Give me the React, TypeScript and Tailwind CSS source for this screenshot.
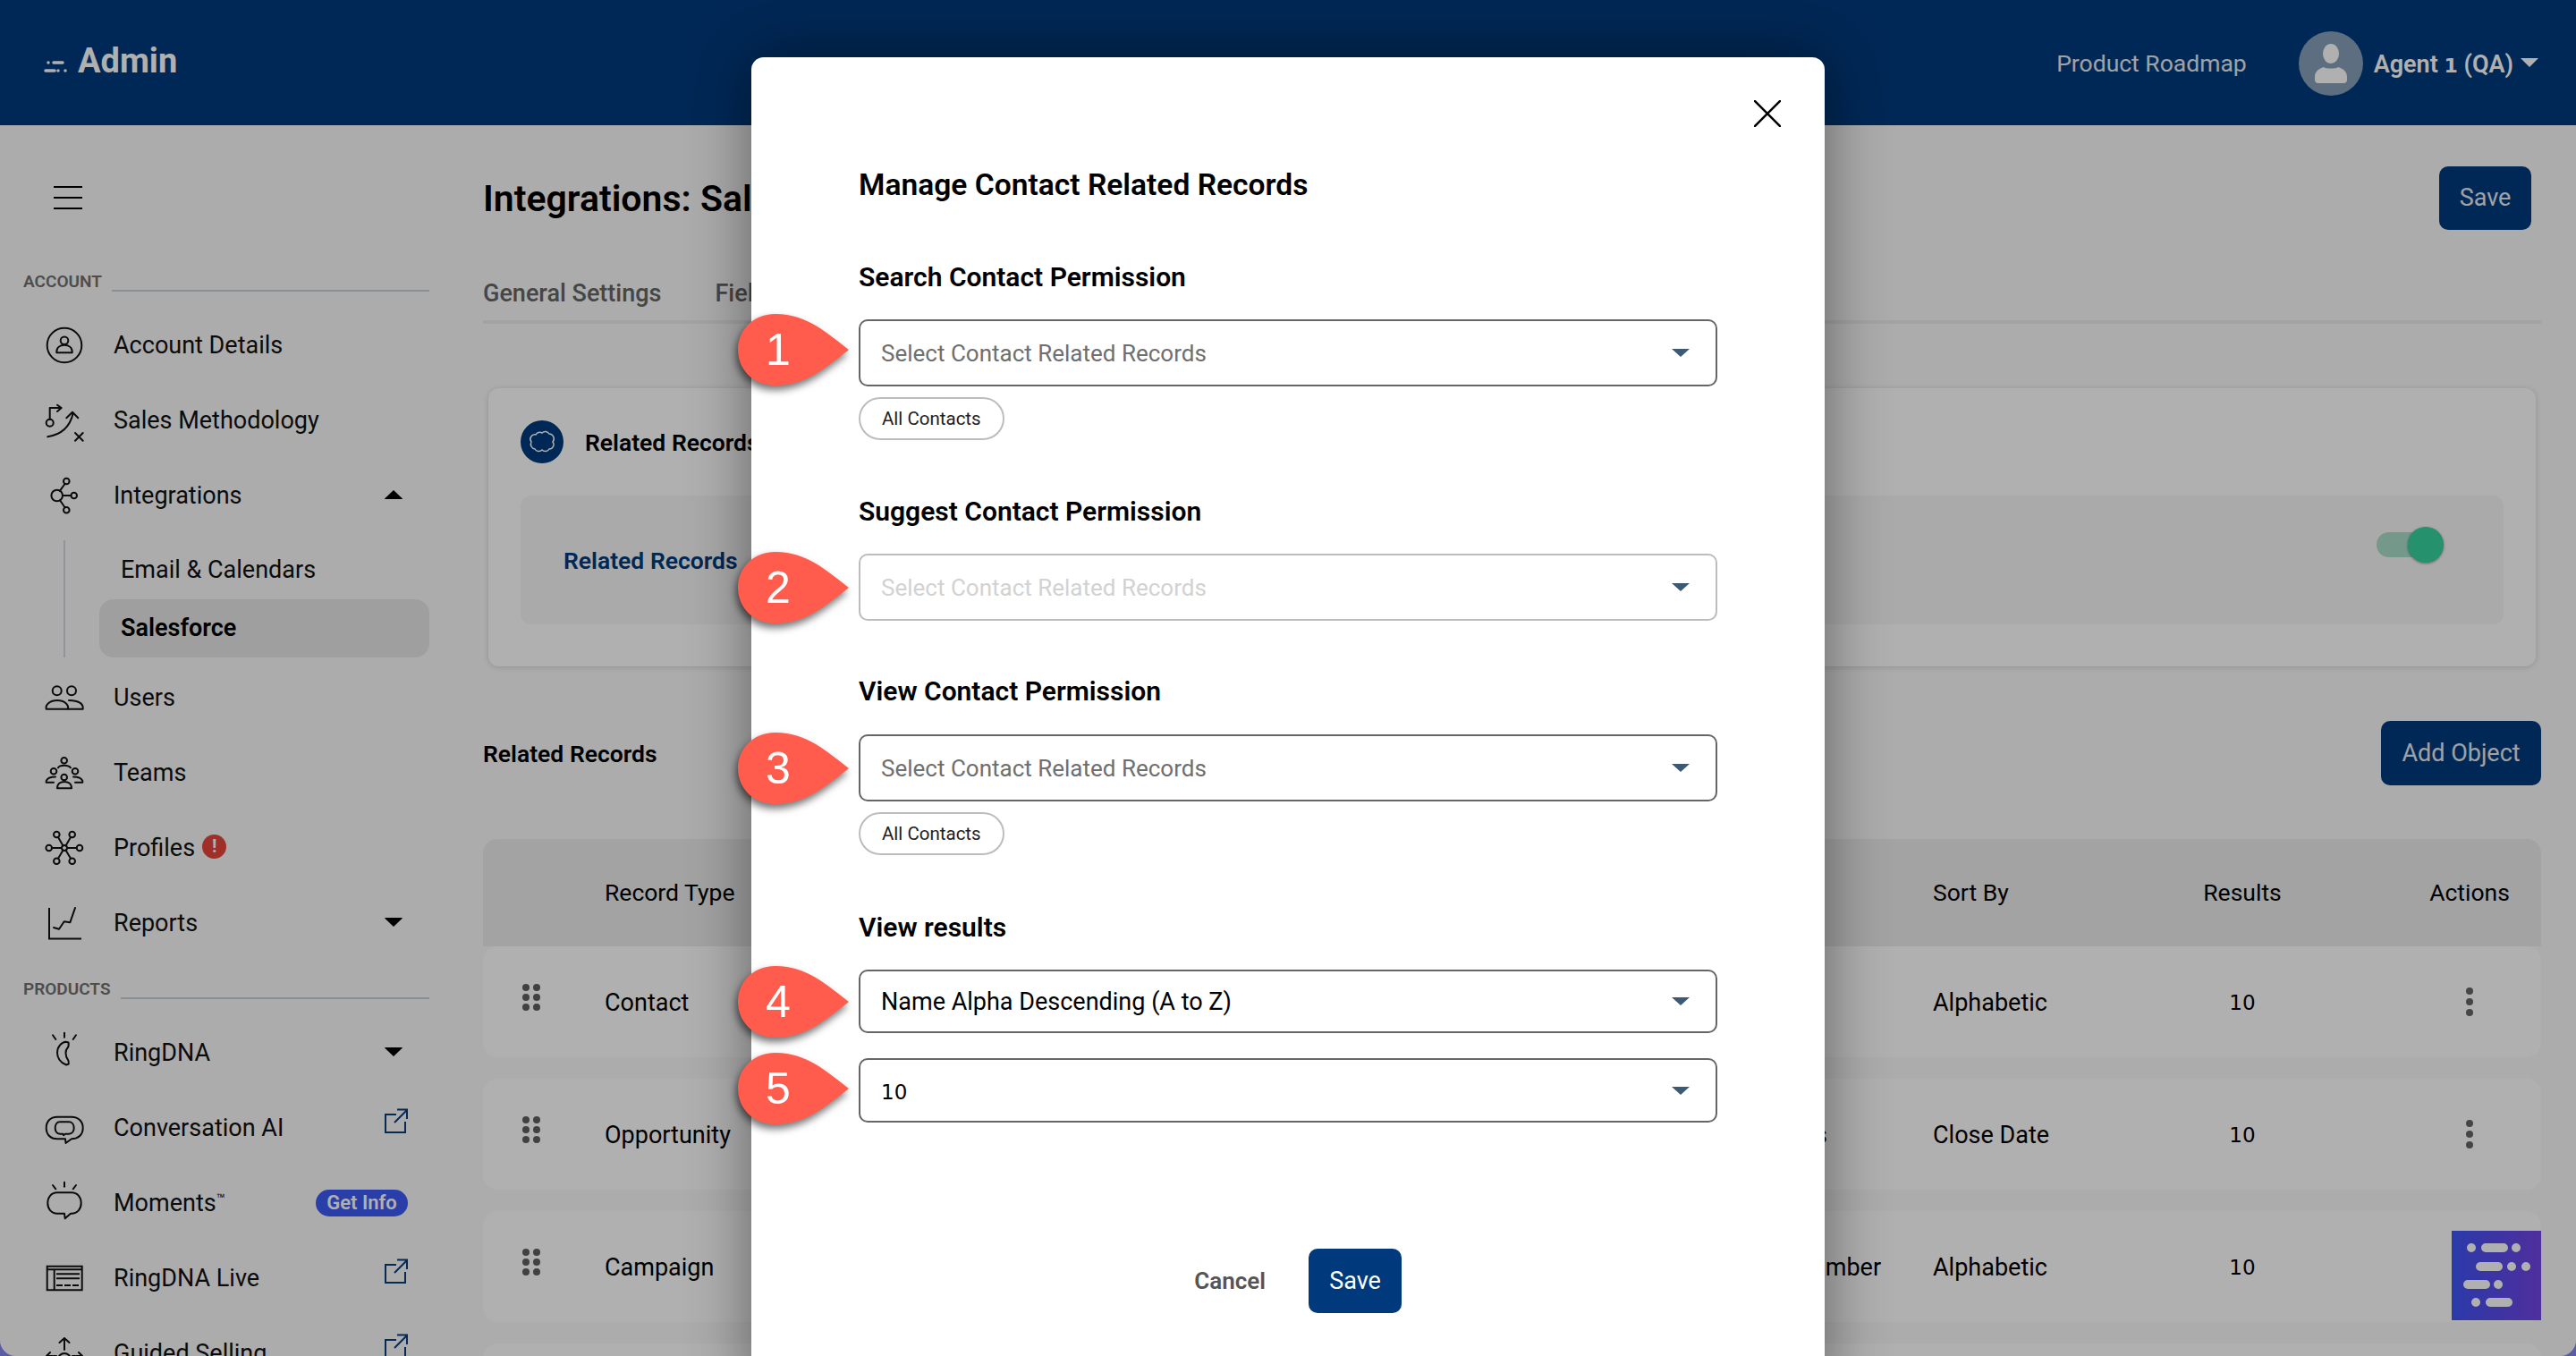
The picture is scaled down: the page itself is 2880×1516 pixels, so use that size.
import { ReactNode } from 'react'

const stroke = {
  fill: 'none',
  stroke: 'currentColor',
  strokeWidth: 2,
  strokeLinecap: 'round' as const,
  strokeLinejoin: 'round' as const
}

const Glyph = ({ children }: { children: ReactNode }) => (
  <svg
    viewBox="0 0 44 44"
    className="w-[44px] h-[44px] shrink-0 overflow-visible text-[#111]"
    {...stroke}
  >
    {children}
  </svg>
)

const AccountIcon = () => (
  <Glyph>
    <circle cx="22" cy="22" r="19.3" />
    <circle cx="22" cy="16.7" r="4.3" />
    <path d="M13.3 30.3v-1c0-5 4-7.5 8.7-7.5s8.7 2.5 8.7 7.5v1z" />
  </Glyph>
)

const SalesIcon = () => (
  <Glyph>
    <circle cx="5.7" cy="24.7" r="4" />
    <path d="M5.7 20.7V8h12.6M14 4.7 18.7 8 14 12" />
    <path d="M3.3 40.3C18 38 28 30 31.7 14M24.3 19.3 31 12.7l6.3 6.6" />
    <path d="M34 36l8.7 8.7M42.7 36 34 44.7" />
  </Glyph>
)

const IntegrationsIcon = () => (
  <Glyph>
    <circle cx="13.7" cy="22" r="6.3" />
    <circle cx="24.3" cy="6" r="3.3" />
    <circle cx="32.7" cy="22" r="3.3" />
    <circle cx="24.3" cy="38.3" r="3.3" />
    <path d="M17 16.7 22.5 9M20 22h9.4M17 27.3l5.5 8" />
  </Glyph>
)

const UsersIcon = () => (
  <Glyph>
    <circle cx="13.7" cy="14.3" r="5" />
    <circle cx="30" cy="14.3" r="5" />
    <path d="M1.7 34.7H26C27 30 22 25 14 25S.5 30 1.7 34.7z" />
    <path d="M26.7 34.7h16C43.5 29 38 25 27 25" />
  </Glyph>
)

const TeamsIcon = () => (
  <Glyph>
    <circle cx="21.7" cy="8.3" r="3.3" />
    <circle cx="10" cy="20.3" r="3.3" />
    <circle cx="34" cy="20.3" r="3.3" />
    <circle cx="21.7" cy="27" r="3.3" />
    <path d="M15 16.3c2-3.3 11-3.3 14 0" />
    <path d="M1.7 32.7V31c1.3-3.5 5.3-4.5 10.3-4.5M42.3 32.7V31c-1.3-3.5-5.3-4.5-10.3-4.5M1.7 32.7H10M34 32.7h8.3" />
    <path d="M14 39.3c0-5.3 4-7.3 8-7.3s8 2 8 7.3z" />
  </Glyph>
)

const ProfilesIcon = () => (
  <Glyph>
    <circle cx="22" cy="22" r="3" />
    <circle cx="4.7" cy="22" r="3.3" />
    <circle cx="39" cy="22" r="3.3" />
    <circle cx="13.3" cy="7" r="3.3" />
    <circle cx="30.7" cy="7" r="3.3" />
    <circle cx="13.3" cy="36.7" r="3.3" />
    <circle cx="30.7" cy="36.7" r="3.3" />
    <path d="M8 22h11M25 22h10.700M15 10l5.500 9.500M29 10l-5.500 9.500M15 33.700l5.500-9.200M29 33.700l-5.500-9.200" />
  </Glyph>
)

const ReportsIcon = () => (
  <Glyph>
    <path d="M5 5v34.500h36" strokeLinecap="butt" strokeLinejoin="miter" />
    <path d="M10 27l6 1.700 5.700-8.400 6.600 1L34 5" />
  </Glyph>
)

const RingIcon = () => (
  <Glyph>
    <path d="M22-.3v5M9 2.300 12.300 7M35 2.300 31.700 7" />
    <path d="M23.700 9.700l2.800.8c.5 2.500 0 5-1 6-2.500 2.500-3 8.500.5 13.500 1 1 1 3 .7 4.500l-2.700 1C17 33 14 27 14 22c0-7 5-12 9.700-12.300z" />
  </Glyph>
)

const ConversationIcon = () => (
  <Glyph>
    <path d="M14 9.700h16c8 0 12.700 5.300 12.700 12.300S38 34.300 30 34.300l-6.500 4.700-.5-4.700h-9C6 34.300 1.700 29 1.700 22S6 9.700 14 9.700z" />
    <path d="M17 15.300h10c3.500 0 5.700 3 5.700 6.700s-2.200 6.700-5.700 6.700h-4l-2 1.500-.5-1.500H17c-3.500 0-5.300-3-5.300-6.700s1.800-6.700 5.300-6.700z" />
  </Glyph>
)

const MomentsIcon = () => (
  <Glyph>
    <path d="M22-1.300v5M9 2l3.300 4.300M35 2l-3.300 4.300" />
    <path d="M14 10.300h16c6.500 0 10.700 5 10.700 11.700S36.500 33.700 30 33.700h-1l-6.300 5.600-.7-5.600h-8C7.500 33.700 3.300 28.700 3.300 22S7.500 10.300 14 10.300z" />
  </Glyph>
)

const LiveIcon = () => (
  <Glyph>
    <path d="M2.700 8.700h39v26.600h-39zM2.700 12.300h39M10.700 12.300v23" strokeLinecap="butt" strokeLinejoin="miter" />
    <path d="M13 17.300h26M13 22.300h26" strokeLinecap="butt" />
    <path d="M13 30h26" strokeLinecap="butt" strokeDasharray="7 2" />
  </Glyph>
)

const GuidedIcon = () => (
  <Glyph>
    <path d="M22 18V5M16.500 10 22 5l5.500 5" />
    <circle cx="22" cy="29" r="7" />
    <path d="M13 25H2M6 21l-4 4 4 4M31 25h11M38 21l4 4-4 4" />
  </Glyph>
)

const Caret = ({ up = false }: { up?: boolean }) => (
  <svg viewBox="0 0 20 10" className="w-[20px] h-[10px] mr-[30px] ml-auto -mt-[3px] text-black">
    <path
      d={up ? 'M10 0 20 9.500Q20 10 19 10H1Q0 10 0 9.500z' : 'M10 10 20 .5Q20 0 19 0H1Q0 0 0 .5z'}
      fill="currentColor"
    />
  </svg>
)

const ExternalLink = () => (
  <svg
    viewBox="0 0 26 28"
    className="w-[26px] h-[28px] ml-auto mr-[24px] -mt-[16px] text-[#0a3d78]"
    fill="none"
    stroke="currentColor"
    strokeWidth="2"
  >
    <path d="M13 7H1v20h22v-12M11 16 25 2M14 1.500h11V12" />
  </svg>
)

const SectionLabel = ({ title }: { title: string }) => (
  <div className="flex items-center gap-[11px] h-[30px]">
    <span className="text-[19px] font-semibold text-[#707070]">{title}</span>
    <span className="flex-1 h-[2px] mt-[20px] bg-[#c9d0d8]" />
  </div>
)

const NavRow = ({
  icon,
  label,
  children
}: {
  icon: ReactNode
  label: ReactNode
  children?: ReactNode
}) => (
  <div className="flex items-center h-[84px] pl-[24px]">
    {icon}
    <span className="ml-[33px] mt-[1px] text-[27px] text-[#111] whitespace-nowrap">{label}</span>
    {children}
  </div>
)

const Sidebar = () => (
  <aside className="w-[540px] shrink-0 pl-[26px] pr-[60px]">
    <div className="flex flex-col gap-[10px] w-[32px] ml-[34px] mt-[68px]">
      <span className="h-[2px] bg-black" />
      <span className="h-[2px] bg-black" />
      <span className="h-[2px] bg-black" />
    </div>
    <div className="mt-[66px]">
      <SectionLabel title="ACCOUNT" />
    </div>
    <div className="mt-[14px]">
      <NavRow icon={<AccountIcon />} label="Account Details" />
      <NavRow icon={<SalesIcon />} label="Sales Methodology" />
      <NavRow icon={<IntegrationsIcon />} label="Integrations">
        <Caret up />
      </NavRow>
      <div className="ml-[45px] mt-[8px] border-l-2 border-[#d3d8de] pl-[38px]">
        <div className="flex items-center h-[66px] pl-[24px] text-[27px] text-[#111]">
          Email &amp; Calendars
        </div>
        <div className="flex items-center h-[65px] pl-[24px] text-[27px] font-semibold text-black bg-[#e6e6e6] rounded-[16px]">
          Salesforce
        </div>
      </div>
      <div className="mt-[3px]">
        <NavRow icon={<UsersIcon />} label="Users" />
        <NavRow icon={<TeamsIcon />} label="Teams" />
        <NavRow
          icon={<ProfilesIcon />}
          label={
            <span className="flex items-center gap-[8px]">
              Profiles
              <span className="w-[27px] h-[27px] -mt-[5px] rounded-full bg-[#e8453c] text-white text-[20px] font-bold leading-[27px] text-center">
                !
              </span>
            </span>
          }
        />
        <NavRow icon={<ReportsIcon />} label="Reports">
          <Caret />
        </NavRow>
      </div>
    </div>
    <div className="mt-[17px]">
      <SectionLabel title="PRODUCTS" />
    </div>
    <div className="mt-[14px]">
      <NavRow icon={<RingIcon />} label="RingDNA">
        <Caret />
      </NavRow>
      <NavRow icon={<ConversationIcon />} label="Conversation AI">
        <ExternalLink />
      </NavRow>
      <NavRow
        icon={<MomentsIcon />}
        label={
          <>
            Moments<sup className="text-[16px]">™</sup>
          </>
        }
      >
        <span className="ml-auto mr-[24px] h-[30px] w-[103px] rounded-full bg-[#3d5bf5] text-white text-[22px] font-semibold leading-[30px] text-center">
          Get Info
        </span>
      </NavRow>
      <NavRow icon={<LiveIcon />} label="RingDNA Live">
        <ExternalLink />
      </NavRow>
      <NavRow icon={<GuidedIcon />} label="Guided Selling">
        <ExternalLink />
      </NavRow>
    </div>
  </aside>
)

const DragHandle = () => (
  <div className="grid grid-cols-2 gap-x-[4px] gap-y-[3px] w-[20px] -mt-[10px]">
    {[0, 1, 2, 3, 4, 5].map(i => (
      <span key={i} className="w-[8px] h-[8px] rounded-full bg-[#5f5f5f]" />
    ))}
  </div>
)

const rows = [
  { type: 'Contact', field: '', sort: 'Alphabetic' },
  { type: 'Opportunity', field: 'Deal Stages', sort: 'Close Date' },
  { type: 'Campaign', field: 'Account Number', sort: 'Alphabetic' },
  { type: 'Account', field: '', sort: 'Alphabetic' }
]

const Table = () => (
  <div className="mt-[60px] text-[27px] text-black">
    <div className="flex items-center h-[120px] text-[26.5px] bg-[#ececec] rounded-t-[16px]">
      <span className="w-[136px]" />
      <span className="w-[1485px]">Record Type</span>
      <span className="w-[246px]">Sort By</span>
      <span className="w-[200px] text-center">Results</span>
      <span className="w-[234px] pl-[74px] text-center">Actions</span>
    </div>
    <div className="flex flex-col gap-[24px]">
      {rows.map(row => (
        <div key={row.type} className="flex items-center h-[124px] bg-white rounded-[16px]">
          <span className="w-[136px] pl-[44px]">
            <DragHandle />
          </span>
          <span className="w-[1204px] pt-[2px]">{row.type}</span>
          <span className="w-[281px] pt-[2px] pl-[20px] whitespace-nowrap">{row.field}</span>
          <span className="w-[246px] pt-[2px]">{row.sort}</span>
          <span className="w-[200px] text-center font-['DejaVu_Sans'] text-[23px] pt-[2px]">10</span>
          <span className="w-[234px] pl-[74px] flex flex-col items-center gap-[4px]">
            <i className="w-[8px] h-[8px] rounded-full bg-[#666]" />
            <i className="w-[8px] h-[8px] rounded-full bg-[#666]" />
            <i className="w-[8px] h-[8px] rounded-full bg-[#666]" />
          </span>
        </div>
      ))}
    </div>
  </div>
)

const Main = () => (
  <main className="flex-1 min-w-0 pt-[46px] pr-[39px]">
    <div className="flex items-center justify-between h-[71px]">
      <h1 className="pt-[2px] text-[41px] font-semibold text-black">Integrations: Salesforce</h1>
      <button className="w-[103px] h-[71px] mr-[11px] rounded-[10px] bg-[#003a7d] text-white/90 text-[27px]">
        Save
      </button>
    </div>
    <div className="flex gap-[60px] h-[105px] pt-[51px] border-b-4 border-[#ededed] text-[27px] font-medium text-[#666]">
      <span>General Settings</span>
      <span>Fields</span>
    </div>
    <section className="mx-[6px] mt-[72px] h-[311px] px-[36px] pt-[36px] bg-white rounded-[12px] shadow-[0_1px_6px_rgba(0,0,0,0.15)]">
      <div className="flex items-center gap-[24px] h-[48px] mb-[36px]">
        <span className="flex items-center justify-center w-[48px] h-[48px] rounded-full bg-[#003a7d]">
          <svg viewBox="0 0 48 48" className="w-[48px] h-[48px] text-white" fill="none" stroke="currentColor" strokeWidth="1.500">
            <path d="M17 16a5 5 0 0 1 7-2 5 5 0 0 1 8 1 5.500 5.500 0 0 1 4 9 5 5 0 0 1-4 8 5 5 0 0 1-8 1 5 5 0 0 1-8-1 5.500 5.500 0 0 1-4-8 5 5 0 0 1 5-8z" />
          </svg>
        </span>
        <span className="pt-[2px] text-[26.5px] font-semibold text-black">Related Records</span>
      </div>
      <div className="flex items-center justify-between h-[144px] pl-[48px] pr-[70px] bg-[#f6f6f6] rounded-[12px]">
        <span className="pt-[2px] text-[26.5px] font-semibold text-[#003a7d]">Related Records</span>
        <div className="relative w-[72px] h-[28px] -mt-[34px] rounded-full bg-[#a8dcc9]">
          <span className="absolute -right-[3px] -top-[6px] w-[40px] h-[40px] rounded-full bg-[#36d29f] shadow-[0_1px_3px_rgba(0,0,0,0.4)]" />
        </div>
      </div>
    </section>
    <div className="flex items-center justify-between mt-[61px] h-[72px]">
      <h2 className="pt-[2px] text-[26.5px] font-semibold text-black">Related Records</h2>
      <button className="w-[179px] h-[72px] rounded-[10px] bg-[#003a7d] text-white/90 text-[27px]">
        Add Object
      </button>
    </div>
    <Table />
  </main>
)

const Callout = ({ n }: { n: number }) => (
  <div className={`absolute -left-[137px] top-1/2 -translate-y-1/2 w-[125px] h-[80px] ${n === 1 ? '-mt-[4px]' : n === 5 ? '-mt-[2px]' : ''}`}>
    <svg
      viewBox="0 0 125 80"
      className="absolute inset-0 w-[125px] h-[80px] overflow-visible drop-shadow-[-2px_5px_4px_rgba(0,0,0,0.55)]"
    >
      <path
        d="M124 40C100 22 78 0 42 0 15 0 0 20 0 40s15 40 42 40c36 0 58-22 82-40z"
        fill="#ff5c4d"
      />
    </svg>
    <span className="absolute left-0 top-0 w-[90px] h-[80px] text-center text-[50px] leading-[80px] text-white font-['Liberation_Sans']">
      {n}
    </span>
  </div>
)

const Select = ({
  n,
  text,
  tone = 'normal',
  className = 'h-[75px]'
}: {
  n: number
  text: ReactNode
  tone?: 'normal' | 'disabled' | 'value'
  className?: string
}) => {
  const box =
    tone === 'disabled'
      ? 'border-[#bdbdbd] text-[#d2d2d2] text-[26px]'
      : tone === 'value'
        ? 'border-[#666] text-black text-[27px]'
        : 'border-[#666] text-[#6f6f6f] text-[26px]'
  return (
    <div className={`relative flex items-center justify-between w-[960px] pl-[23px] pr-[29px] border-2 rounded-[10px] ${box} ${className}`}>
      <span className="pt-[2px]">{text}</span>
      <svg viewBox="0 0 20 9" className="w-[20px] h-[9px] text-[#3d5a74]">
        <path d="M0 0h20L10 9z" fill="currentColor" />
      </svg>
      <Callout n={n} />
    </div>
  )
}

const Chip = () => (
  <span className="inline-flex items-center h-[48px] mt-[12px] px-[24px] border-2 border-[#bdbdbd] rounded-full text-[20.5px] text-[#222]">
    All Contacts
  </span>
)

const Label = ({ children, className = '' }: { children: ReactNode; className?: string }) => (
  <div className={`h-[40px] leading-[40px] text-[30px] font-semibold text-black ${className}`}>
    {children}
  </div>
)

const Modal = () => (
  <div className="absolute inset-0 flex justify-center pt-[64px]">
    <div className="relative w-[1200px] h-[1500px] px-[120px] pt-[121px] bg-white rounded-[14px] shadow-[0_0_70px_rgba(0,0,0,0.45)]">
      <svg viewBox="0 0 30 30" className="absolute left-[1121px] top-[48px] w-[30px] h-[30px] text-black" fill="none" stroke="currentColor" strokeWidth="2.500">
        <path d="M0 0l30 30M30 0 0 30" />
      </svg>
      <h3 className="h-[44px] leading-[44px] text-[33.6px] font-semibold text-black">
        Manage Contact Related Records
      </h3>
      <Label className="mt-[61px] mb-[27px]">Search Contact Permission</Label>
      <Select n={1} text="Select Contact Related Records" />
      <Chip />
      <Label className="mt-[60px] mb-[27px]">Suggest Contact Permission</Label>
      <Select n={2} text="Select Contact Related Records" tone="disabled" />
      <Label className="mt-[59px] mb-[28px]">View Contact Permission</Label>
      <Select n={3} text="Select Contact Related Records" />
      <Chip />
      <Label className="mt-[61px] mb-[27px]">View results</Label>
      <Select n={4} text="Name Alpha Descending (A to Z)" tone="value" className="h-[71px]" />
      <Select
        n={5}
        text={<span className="font-['DejaVu_Sans'] text-[23px]">10</span>}
        tone="value"
        className="h-[72px] mt-[28px]"
      />
      <div className="flex items-center justify-end gap-[48px] mt-[141px] pr-[353px]">
        <span className="text-[26px] font-semibold text-[#555]">Cancel</span>
        <button className="w-[104px] h-[72px] rounded-[10px] bg-[#003a7d] text-white text-[27px]">
          Save
        </button>
      </div>
    </div>
  </div>
)

const Widget = () => (
  <svg
    viewBox="0 0 100 100"
    className="absolute right-[39px] bottom-[40px] w-[100px] h-[100px]"
    fill="none"
    stroke="#fff"
    strokeWidth="10"
    strokeLinecap="round"
  >
    <defs>
      <linearGradient id="widget" x1="0" x2="1" y1="0" y2="0">
        <stop offset="0" stopColor="#3f54f5" />
        <stop offset="1" stopColor="#7344e4" />
      </linearGradient>
    </defs>
    <rect width="100" height="100" fill="url(#widget)" stroke="none" />
    <path d="M22 19h.01M38 19h20M72 19h.01M32 40h20M67 40h.01M83 40h.01M18 60h20M52 60h.01M27 80h.01M43 80h20" />
  </svg>
)

const Header = () => (
  <header className="flex items-center h-[140px] pl-[49px] pr-[42px] bg-[#003a7d] text-white shrink-0">
    <svg viewBox="0 0 30 16" className="w-[30px] h-[16px] mt-[10px] mr-[8px]" fill="none" stroke="currentColor" strokeWidth="3.500" strokeLinecap="round">
      <path d="M5 3h.01M11 3h10M2 12h10M16 12h.01M24 12h.01" />
    </svg>
    <span className="text-[38px] font-bold -mt-[4px]">Admin</span>
    <span className="ml-auto pt-[2px] text-[26.5px] text-white/90">Product Roadmap</span>
    <span className="flex items-center justify-center w-[72px] h-[72px] mt-[2px] ml-[58px] rounded-full bg-[#87a0ba]">
      <svg viewBox="0 0 36 44" className="w-[36px] h-[44px] text-white" fill="currentColor">
        <ellipse cx="18" cy="11" rx="9" ry="11" />
        <path d="M0 37c0-6 4-9 10-11 2 2 14 2 16 0 6 2 10 5 10 11v3a4 4 0 0 1-4 4H4a4 4 0 0 1-4-4z" />
      </svg>
    </span>
    <span className="ml-[12px] pt-[4px] text-[27px] font-semibold">
      Agent <span className="font-['DejaVu_Sans'] text-[22px]">1</span> (QA)
    </span>
    <svg viewBox="0 0 20 10" className="w-[20px] h-[10px] ml-[8px]">
      <path d="M0 0h20L10 10z" fill="#fff" />
    </svg>
  </header>
)

const App = () => (
  <div className="h-[1516px] bg-[#5b5ca3] font-['Roboto',sans-serif]">
    <div className="relative flex flex-col h-full overflow-hidden bg-[#f9f9f9] rounded-b-[18px]">
      <Header />
      <div className="flex flex-1 min-h-0">
        <Sidebar />
        <Main />
      </div>
      <Widget />
      <div className="absolute inset-0 bg-black/[0.31]" />
      <Modal />
    </div>
  </div>
)

export default App
